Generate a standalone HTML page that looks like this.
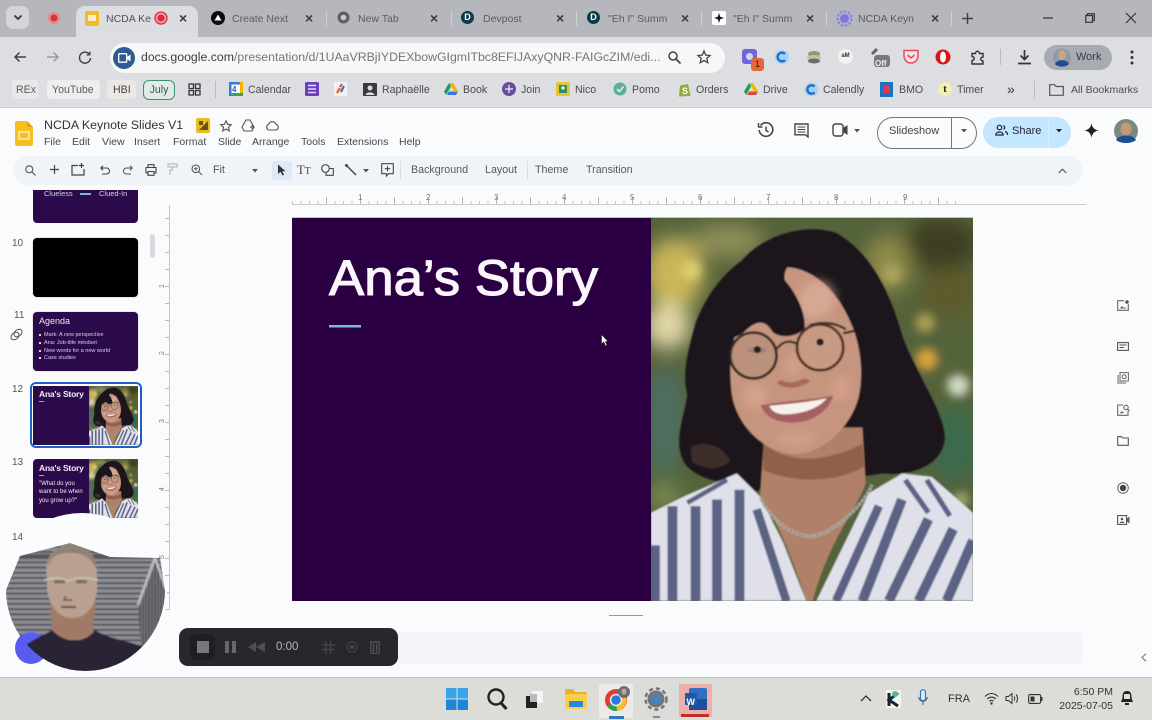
<!DOCTYPE html>
<html><head><meta charset="utf-8"><title>NCDA Keynote Slides V1</title>
<style>
html,body{margin:0;padding:0}
body{width:1152px;height:720px;overflow:hidden;position:relative;background:#f9fbfd;font-family:"Liberation Sans",sans-serif;color:#444}
#w{position:absolute;left:0;top:0;width:1152px;height:720px;overflow:hidden;filter:blur(.35px)}
.a{position:absolute}
.t{position:absolute;white-space:nowrap;line-height:16px;height:16px}
svg.i{position:absolute;overflow:visible}
.tab{font-size:10.5px;color:#5a5c62;top:11px}
.x{font-size:14px;color:#3a3a3e;top:10px;font-weight:bold}
.bm{font-size:10.6px;color:#4a4b50;top:82px}
.me{font-size:10.5px;color:#45474a;top:134px}
.tb{font-size:10.7px;color:#55585c;top:162px}
.r{font-size:8px;color:#777;top:190px}
.rv{font-size:7px;color:#777;left:161px;transform:rotate(-90deg)}
</style></head>
<body>
<svg width="0" height="0" style="position:absolute">
<defs>
<filter id="b30" x="-50%" y="-50%" width="200%" height="200%"><feGaussianBlur stdDeviation="30"/></filter>
<filter id="b14" x="-50%" y="-50%" width="200%" height="200%"><feGaussianBlur stdDeviation="14"/></filter>
<filter id="b2" x="-5%" y="-5%" width="110%" height="110%"><feGaussianBlur stdDeviation="2.500"/></filter>
<clipPath id="sh"><path d="M0,900L100,850L260,780L330,850L400,990L470,1170L500,1170L660,840L760,780L850,790L975,900V1170H0Z"/></clipPath>
<symbol id="ana" viewBox="0 0 975 1170" preserveAspectRatio="none">
<rect width="975" height="1170" fill="#55633b"/>
<g filter="url(#b30)">
<ellipse cx="70" cy="170" rx="90" ry="110" fill="#c9b65a"/>
<ellipse cx="50" cy="330" rx="70" ry="70" fill="#e2d8a8"/>
<ellipse cx="230" cy="70" rx="110" ry="50" fill="#8f8f58"/>
<ellipse cx="720" cy="140" rx="70" ry="90" fill="#8f8a4a"/>
<ellipse cx="880" cy="80" rx="110" ry="80" fill="#3c3d22"/>
<ellipse cx="900" cy="230" rx="80" ry="80" fill="#5f5a2c"/>
<ellipse cx="40" cy="620" rx="60" ry="170" fill="#4d6e60"/>
<ellipse cx="920" cy="690" rx="70" ry="120" fill="#3a6a4c"/>
<ellipse cx="40" cy="850" rx="50" ry="40" fill="#7b8d50"/>
</g>
<g filter="url(#b14)">
<circle cx="830" cy="320" r="30" fill="#a89c52"/>
<circle cx="835" cy="432" r="34" fill="#d9a03c"/>
<circle cx="930" cy="512" r="34" fill="#cfd8c2"/>
<circle cx="940" cy="860" r="22" fill="#a8ae78"/>
<circle cx="730" cy="170" r="30" fill="#a8a45c"/>
<circle cx="120" cy="160" r="30" fill="#dccd70"/>
</g>
<g filter="url(#b2)">
<path fill="#1e191d" d="M275,130C340,50 470,15 560,45C650,95 715,200 755,340C790,460 885,580 890,670C885,750 800,790 700,780L640,790L330,830L300,850C270,800 170,820 110,760C60,700 100,610 110,540C90,470 120,380 135,320C170,230 220,170 275,130Z"/>
<path fill="#5a4038" opacity=".55" d="M120,700C160,680 210,690 240,740C220,770 160,770 125,745Z"/>
<path fill="#b08069" d="M345,640L640,640L650,810C630,880 540,980 490,1170H470C430,1040 370,900 330,850Z"/>
<path fill="#8f604c" d="M340,690C420,750 520,750 640,690L645,760C560,810 430,810 340,770Z"/>
<path fill="#c6957f" d="M405,150C480,150 560,210 605,320C640,400 642,490 628,550C600,650 510,722 435,722C345,716 262,640 245,540C235,450 240,380 268,330C320,280 375,220 405,150Z"/>
<g filter="url(#b14)">
<ellipse cx="500" cy="250" rx="55" ry="60" fill="#dcb09d" opacity=".7" transform="rotate(40 500 250)"/>
<ellipse cx="315" cy="545" rx="35" ry="40" fill="#d9a58f" opacity=".8"/>
<ellipse cx="575" cy="520" rx="30" ry="40" fill="#d6a08b" opacity=".8"/>
<ellipse cx="440" cy="675" rx="60" ry="25" fill="#d2a28e" opacity=".7"/>
<path fill="#d5a590" opacity=".7" d="M415,420H445L455,480H405Z"/>
</g>
<path fill="#1f191c" d="M275,130C320,90 400,60 470,125C425,128 400,150 405,190C440,230 470,290 465,340C440,360 400,370 370,350C350,320 330,300 280,350C262,365 245,362 232,375L200,330C210,250 230,180 275,130Z"/>
<path fill="none" stroke="#3c2c28" stroke-width="7" d="M480,328C520,315 560,320 590,340"/>
<circle cx="310" cy="420" r="70" fill="#a98c7c" fill-opacity=".4" stroke="#33251f" stroke-width="8"/>
<circle cx="512" cy="395" r="70" fill="#c89f8a" fill-opacity=".45" stroke="#4b2f22" stroke-width="8"/>
<path d="M380,400C400,375 420,372 442,385M582,352L615,345" stroke="#33251f" stroke-width="7" fill="none"/>
<path fill="#a5807a" d="M290,405C305,390 335,390 352,405C335,416 305,416 290,405Z"/><circle cx="322" cy="402" r="11" fill="#2a1d18"/>
<path fill="#c0a090" d="M482,385C500,368 530,368 550,382C530,392 500,394 482,385Z"/><circle cx="512" cy="379" r="11" fill="#2a1d18"/>
<path fill="#a86a55" d="M382,505C405,525 455,522 482,498C470,488 460,490 452,495C430,505 410,505 395,495C390,496 385,500 382,505Z"/>
<path fill="#a65f62" d="M332,572C400,560 480,555 552,543C535,600 472,628 420,625C372,622 345,604 332,572Z"/>
<path fill="#f6f2ea" d="M358,574C420,568 480,562 532,551C505,585 450,600 400,600C378,598 366,590 358,574Z"/>
<g clip-path="url(#sh)">
<rect y="770" width="975" height="400" fill="#dfe0ea"/>
<g stroke="#5c6284" fill="none" stroke-width="30">
<path d="M12,1000V1170M65,880V1170M135,880V1170M200,860V1170M268,830V1170"/>
<path d="M320,890L410,1170" stroke-width="26"/>
<path d="M690,880L560,1170" stroke-width="26"/>
<path d="M760,860L640,1170M840,920L720,1170M915,950L810,1170M975,985L895,1170"/>
<path d="M110,870L230,800" stroke-width="14"/>
<path d="M770,800L840,900M835,800L905,910" stroke-width="16"/>
</g>
</g>
<path fill="none" stroke="#c4c4c4" stroke-width="9" stroke-dasharray="12 2" d="M330,855C380,950 450,975 490,972C560,960 640,880 670,815"/>
<path fill="none" stroke="#55503e" stroke-width="2" d="M330,855C380,950 450,975 490,972C560,960 640,880 670,815"/>
</g>
</symbol>
</defs>
</svg>
<div id="w">

<!-- tab strip -->
<div class="a" style="left:0;top:0;width:1152px;height:37px;background:#b6b7bd"></div>
<div class="a" style="left:6px;top:6px;width:23px;height:23px;background:#d4d5d9;border-radius:7px"></div>
<svg class="i" style="left:13px;top:14px" width="10" height="8"><path d="M1.500,1.500L5,5L8.500,1.500" stroke="#333" stroke-width="1.700" fill="none"/></svg>
<svg class="i" style="left:47px;top:11px" width="14" height="14"><circle cx="7" cy="7" r="6" fill="#e58c90"/><circle cx="7" cy="7" r="3.500" fill="#d8323a"/></svg>
<div class="a" style="left:76px;top:6px;width:122px;height:31px;background:#dcdde0;border-radius:9px 9px 0 0"></div>
<div class="a" style="left:85px;top:11px;width:14px;height:15px;background:#eebb2c;border-radius:2px"></div>
<div class="a" style="left:88px;top:15px;width:8px;height:6px;background:#fbeec0"></div>
<div class="t tab" style="left:106px;color:#50525a">NCDA Ke</div>
<svg class="i" style="left:154px;top:11px" width="14" height="14"><circle cx="7" cy="7" r="6" fill="#f0a0a4"/><circle cx="7" cy="7" r="3.500" fill="#dc2c3c"/><circle cx="7" cy="7" r="6" fill="none" stroke="#dc2c3c" stroke-width="1.300"/></svg>
<div class="t x" style="left:179px">×</div>

<svg class="i" style="left:211px;top:11px" width="14" height="14"><circle cx="7" cy="7" r="7" fill="#0b0b10"/><path d="M7,3.500L10.500,9.500H3.500Z" fill="#fff"/></svg>
<div class="t tab" style="left:232px">Create Next</div><div class="t x" style="left:305px">×</div>
<div class="a" style="left:326px;top:11px;width:1px;height:15px;background:#cfd0d4"></div>
<svg class="i" style="left:337px;top:11px" width="13" height="13"><circle cx="6.500" cy="6.500" r="6" fill="#5f6066"/><circle cx="6.500" cy="6.500" r="2.800" fill="#c8c9cd"/></svg>
<div class="t tab" style="left:358px">New Tab</div><div class="t x" style="left:430px">×</div>
<div class="a" style="left:451px;top:11px;width:1px;height:15px;background:#cfd0d4"></div>
<div class="a" style="left:461px;top:11px;width:13px;height:13px;background:#0b3c49;border-radius:50%;color:#fff;font-size:9px;line-height:13px;text-align:center;font-weight:bold">D</div>
<div class="t tab" style="left:483px">Devpost</div><div class="t x" style="left:556px">×</div>
<div class="a" style="left:576px;top:11px;width:1px;height:15px;background:#cfd0d4"></div>
<div class="a" style="left:587px;top:11px;width:13px;height:13px;background:#0b3c49;border-radius:50%;color:#fff;font-size:9px;line-height:13px;text-align:center;font-weight:bold">D</div>
<div class="t tab" style="left:608px">"Eh I" Summ</div><div class="t x" style="left:681px">×</div>
<div class="a" style="left:701px;top:11px;width:1px;height:15px;background:#cfd0d4"></div>
<div class="a" style="left:712px;top:11px;width:14px;height:14px;background:#fff;border-radius:2px"></div>
<svg class="i" style="left:714px;top:13px" width="10" height="10"><path d="M5,0L6.200,3.800L10,5L6.200,6.200L5,10L3.800,6.200L0,5L3.800,3.800Z" fill="#111"/></svg>
<div class="t tab" style="left:733px">"Eh I" Summ</div><div class="t x" style="left:806px">×</div>
<div class="a" style="left:826px;top:11px;width:1px;height:15px;background:#cfd0d4"></div>
<svg class="i" style="left:837px;top:11px" width="15" height="15"><circle cx="7.500" cy="7.500" r="4.500" fill="#7c78e0"/><circle cx="7.500" cy="7.500" r="7" fill="none" stroke="#8a86ea" stroke-width="2.500" stroke-dasharray="2.500 1.500"/></svg>
<div class="t tab" style="left:858px">NCDA Keyn</div><div class="t x" style="left:931px">×</div>
<div class="a" style="left:951px;top:11px;width:1px;height:15px;background:#cfd0d4"></div>
<svg class="i" style="left:962px;top:13px" width="11" height="11"><path d="M5.500,0V11M0,5.500H11" stroke="#444" stroke-width="1.500"/></svg>
<svg class="i" style="left:1043px;top:17px" width="10" height="2"><path d="M0,1H10" stroke="#333" stroke-width="1.200"/></svg>
<svg class="i" style="left:1085px;top:13px" width="10" height="10"><path d="M2.500,2.500V.7H9.300V7.500H7.500M.7,2.500H7.500V9.300H.7Z" stroke="#333" stroke-width="1.200" fill="none"/></svg>
<svg class="i" style="left:1126px;top:13px" width="10" height="10"><path d="M0,0L10,10M10,0L0,10" stroke="#333" stroke-width="1.200"/></svg>

<!-- chrome toolbar -->
<div class="a" style="left:0;top:37px;width:1152px;height:71px;background:#dddee1"></div>
<div class="a" style="left:0;top:107px;width:1152px;height:1px;background:#cfd0d3"></div>
<svg class="i" style="left:13px;top:51px" width="14" height="12"><path d="M13,6H2M6.500,1.500L2,6L6.500,10.500" stroke="#444" stroke-width="1.500" fill="none"/></svg>
<svg class="i" style="left:46px;top:51px" width="14" height="12"><path d="M1,6H12M7.500,1.500L12,6L7.500,10.500" stroke="#9a9b9f" stroke-width="1.500" fill="none"/></svg>
<svg class="i" style="left:78px;top:50px" width="14" height="14"><path d="M11.500,4.500A5.500,5.500 0 1 0 12.500,8" stroke="#444" stroke-width="1.500" fill="none"/><path d="M12.500,1V5.500H8Z" fill="#444"/></svg>
<div class="a" style="left:110px;top:43px;width:615px;height:30px;background:#f6f7f6;border-radius:15px"></div>
<div class="a" style="left:113px;top:47px;width:22px;height:22px;background:#2f5b94;border-radius:50%"></div>
<svg class="i" style="left:118px;top:53px" width="13" height="10"><rect x=".7" y=".7" width="8" height="8.500" rx="1" stroke="#fff" fill="none" stroke-width="1.300"/><path d="M9,4L12.500,1.500V8.500L9,6Z" fill="#fff"/></svg>
<div class="t" style="left:141px;top:49px;font-size:12.3px;color:#3c3d40;width:520px;overflow:hidden">docs.google.com<span style="color:#74767c">/presentation/d/1UAaVRBjIYDEXbowGIgmITbc8EFIJAxyQNR-FAIGcZIM/edi...</span></div>
<svg class="i" style="left:668px;top:51px" width="13" height="13"><circle cx="5" cy="5" r="4" stroke="#444" stroke-width="1.500" fill="none"/><path d="M8,8L12.500,12.500" stroke="#444" stroke-width="1.800"/></svg>
<svg class="i" style="left:697px;top:50px" width="14" height="14"><path d="M7,1L8.800,5.100L13,5.500L9.800,8.400L10.800,12.800L7,10.500L3.200,12.800L4.200,8.400L1,5.500L5.200,5.100Z" stroke="#444" stroke-width="1.300" fill="none"/></svg>

<div class="a" style="left:742px;top:49px;width:15px;height:15px;background:#6e67d8;border-radius:3px"></div>
<svg class="i" style="left:745px;top:52px" width="9" height="9"><circle cx="4.500" cy="4.500" r="3.500" fill="#d8d6f8"/></svg>
<div class="a" style="left:751px;top:58px;width:13px;height:13px;background:#e8663c;border-radius:3px;color:#222;font-size:9px;line-height:13px;text-align:center">1</div>
<svg class="i" style="left:774px;top:49px" width="16" height="16"><circle cx="8" cy="8" r="7" fill="#a8d0f4"/><path d="M11,5A4.300,4.300 0 1 0 11,11" stroke="#1a6fd0" stroke-width="2.400" fill="none"/></svg>
<svg class="i" style="left:806px;top:50px" width="16" height="14"><ellipse cx="8" cy="4" rx="6" ry="3" fill="#8a9a70"/><ellipse cx="8" cy="8" rx="7" ry="3" fill="#c8c0a0"/><ellipse cx="8" cy="11" rx="6" ry="2.500" fill="#6e6e68"/></svg>
<div class="a" style="left:838px;top:49px;width:15px;height:15px;background:#f2f2f2;border-radius:50%;color:#333;font-size:6px;line-height:15px;text-align:center;font-weight:bold">aM</div>
<svg class="i" style="left:871px;top:46px" width="20" height="22"><path d="M1,8L6,3" stroke="#666" stroke-width="3"/><rect x="3" y="9" width="16" height="12" rx="3" fill="#77797d"/></svg>
<div class="t" style="left:875px;top:58px;font-size:8px;color:#eee;font-weight:bold;line-height:12px;height:12px">Off</div>
<svg class="i" style="left:903px;top:49px" width="16" height="15"><path d="M1,1.500H15V7A7,7 0 0 1 1,7Z" fill="#fbe0e4" stroke="#e84a60" stroke-width="1.500"/><path d="M4.500,6L8,9L11.500,6" stroke="#e84a60" stroke-width="1.500" fill="none"/></svg>
<svg class="i" style="left:935px;top:49px" width="16" height="16"><circle cx="8" cy="8" r="7.500" fill="#d81818"/><ellipse cx="8" cy="8" rx="3" ry="5.500" fill="#fff"/></svg>
<svg class="i" style="left:970px;top:50px" width="15" height="15"><path d="M2,3.500H5.500C5.500,.5 9.500,.5 9.500,3.500H13V7C10,7 10,11 13,11V14H2V10.500C5,10.500 5,6.500 2,6.500Z" stroke="#333" stroke-width="1.400" fill="none"/></svg>
<div class="a" style="left:1000px;top:49px;width:1px;height:16px;background:#bbb"></div>
<svg class="i" style="left:1017px;top:50px" width="15" height="15"><path d="M7.500,0V9M3.500,5.500L7.500,9.500L11.500,5.500M1,13.500H14" stroke="#333" stroke-width="1.700" fill="none"/></svg>
<div class="a" style="left:1044px;top:45px;width:68px;height:25px;background:#a9abb2;border-radius:13px"></div>
<svg class="i" style="left:1053px;top:48px" width="18" height="19"><circle cx="9" cy="9.500" r="9" fill="#8d9aa8"/><ellipse cx="9" cy="7" rx="4" ry="5" fill="#caa488"/><path d="M2,16C4,11 14,11 16,16C13,19.500 5,19.500 2,16Z" fill="#1c4f90"/></svg>
<div class="t" style="left:1076px;top:49px;font-size:11px;color:#3a3b40">Work</div>
<svg class="i" style="left:1130px;top:50px" width="4" height="15"><circle cx="2" cy="2" r="1.500" fill="#333"/><circle cx="2" cy="7.500" r="1.500" fill="#333"/><circle cx="2" cy="13" r="1.500" fill="#333"/></svg>

<!-- bookmarks -->
<div class="a" style="left:12px;top:80px;width:26px;height:19px;background:#e8e8ea;border-radius:4px"></div>
<div class="a" style="left:47px;top:80px;width:53px;height:19px;background:#eeeeef;border-radius:4px"></div>
<div class="a" style="left:107px;top:80px;width:29px;height:19px;background:#ebe8e4;border-radius:4px"></div>
<div class="t bm" style="left:16px;color:#5c5d62">REx</div>
<div class="t bm" style="left:52px;color:#5c5d62">YouTube</div>
<div class="t bm" style="left:113px;color:#444">HBI</div>
<div class="a" style="left:143px;top:80px;width:30px;height:18px;border:1px solid #3f8f78;border-radius:6px;background:#e0ebe6;color:#3c5a50;font-size:10.6px;line-height:18px;text-align:center">July</div>
<svg class="i" style="left:188px;top:83px" width="13" height="13"><path d="M1,1H5.500V5.500H1ZM7.500,1H12V5.500H7.500ZM1,7.500H5.500V12H1ZM7.500,7.500H12V12H7.500Z" stroke="#333" stroke-width="1.300" fill="none"/></svg>
<div class="a" style="left:215px;top:81px;width:1px;height:17px;background:#bcbcc0"></div>
<svg class="i" style="left:229px;top:82px" width="14" height="14"><rect width="14" height="14" fill="#fff"/><rect width="14" height="2.500" fill="#3a78e0"/><rect width="2.500" height="14" fill="#3a78e0"/><rect x="11" width="3" height="11" fill="#f4b400"/><rect x="2" y="11" width="12" height="3" fill="#34a853"/></svg>
<div class="t" style="left:232px;top:83px;font-size:8px;color:#2a5db8;line-height:13px;font-weight:bold">4</div>
<div class="t bm" style="left:248px">Calendar</div>
<svg class="i" style="left:305px;top:82px" width="14" height="14"><rect width="14" height="14" rx="1.500" fill="#6a3fc0"/><path d="M3,3.500H11M3,7H11M3,10.500H11" stroke="#e4dcf8" stroke-width="1.500"/></svg>
<svg class="i" style="left:334px;top:82px" width="13" height="14"><rect width="13" height="14" fill="#f2f2f2"/><path d="M3,11L6,6" stroke="#f06a2a" stroke-width="2.500"/><path d="M7,10L10,4" stroke="#2a6ad8" stroke-width="2"/><path d="M6,5L8,2" stroke="#e03a50" stroke-width="2"/></svg>
<svg class="i" style="left:363px;top:83px" width="14" height="13"><rect width="14" height="13" rx="1" fill="#3a3a3e"/><circle cx="7" cy="5" r="2.500" fill="#ddd"/><path d="M2.500,12C3.500,8.500 10.500,8.500 11.500,12Z" fill="#ddd"/></svg>
<div class="t bm" style="left:382px">Raphaëlle</div>
<svg class="i" style="left:444px;top:83px" width="14" height="12"><path d="M5,0H9L14,8H10Z" fill="#f4b400"/><path d="M5,0L0,8.500L2,12L7,3.500Z" fill="#1a9e5c"/><path d="M3,12H12L14,8.500H4.800Z" fill="#3a78e0"/></svg>
<div class="t bm" style="left:463px">Book</div>
<svg class="i" style="left:502px;top:82px" width="14" height="14"><circle cx="7" cy="7" r="7" fill="#6a4ca0"/><path d="M7,3V11M3,7H11" stroke="#ddd" stroke-width="1.500"/></svg>
<div class="t bm" style="left:521px">Join</div>
<svg class="i" style="left:556px;top:82px" width="14" height="14"><rect width="14" height="14" rx="2" fill="#e6c432"/><rect x="3" y="3" width="8" height="8" fill="#2f8f5a"/><circle cx="7" cy="6" r="1.700" fill="#eee"/></svg>
<div class="t bm" style="left:575px">Nico</div>
<svg class="i" style="left:613px;top:82px" width="14" height="14"><circle cx="7" cy="7" r="6.500" fill="#5aae9e"/><path d="M4,7L6.300,9.500L10.500,4.500" stroke="#eee" stroke-width="1.500" fill="none"/></svg>
<div class="t bm" style="left:632px">Pomo</div>
<svg class="i" style="left:678px;top:82px" width="13" height="15"><path d="M2,3.500L10,2L12.500,14L1,14.500Z" fill="#8fae3c"/><text x="4" y="12" font-size="9" fill="#fff" font-family="Liberation Sans" font-weight="bold">S</text></svg>
<div class="t bm" style="left:696px">Orders</div>
<svg class="i" style="left:744px;top:83px" width="14" height="12"><path d="M5,0H9L14,8H10Z" fill="#f4b400"/><path d="M5,0L0,8.500L2,12L7,3.500Z" fill="#1a9e5c"/><path d="M3,12H12L14,8.500H4.800Z" fill="#d84a3a"/></svg>
<div class="t bm" style="left:763px">Drive</div>
<svg class="i" style="left:804px;top:82px" width="15" height="15"><circle cx="7.500" cy="7.500" r="7" fill="#a8d0f4"/><path d="M10.500,4.500A4.200,4.200 0 1 0 10.500,10.500" stroke="#1a6fd0" stroke-width="2.400" fill="none"/></svg>
<div class="t bm" style="left:823px">Calendly</div>
<svg class="i" style="left:880px;top:82px" width="13" height="15"><rect width="13" height="15" fill="#1a72c0"/><rect x="3" y="4" width="7" height="7" rx="1" fill="#e03a50"/></svg>
<div class="t bm" style="left:899px">BMO</div>
<div class="a" style="left:938px;top:82px;width:14px;height:14px;background:#f4eeb0;border-radius:50%;color:#222;font:bold 11px/14px 'Liberation Serif',serif;text-align:center">t</div>
<div class="t bm" style="left:957px">Timer</div>
<div class="t" style="left:1007px;top:81px;font-size:14px;color:#333">»</div>
<div class="a" style="left:1034px;top:81px;width:1px;height:17px;background:#bcbcc0"></div>
<svg class="i" style="left:1049px;top:84px" width="15" height="12"><path d="M.7,.7H5.500L7,2.500H14.300V11.300H.7Z" stroke="#555" stroke-width="1.200" fill="none"/></svg>
<div class="t bm" style="left:1071px;font-size:10.500px">All Bookmarks</div>

<!-- Slides header -->
<div class="a" style="left:0;top:108px;width:1152px;height:569px;background:#f9fbfd"></div>
<svg class="i" style="left:15px;top:121px" width="18" height="25"><path d="M2,0H12L18,6V23A2,2 0 0 1 16,25H2A2,2 0 0 1 0,23V2A2,2 0 0 1 2,0Z" fill="#f7bf1e"/><path d="M12,0L18,6H12Z" fill="#e3a50f"/><rect x="4" y="11" width="10" height="7" fill="none" stroke="#fdeeb6" stroke-width="1.500"/></svg>
<div class="t" style="left:44px;top:117px;font-size:12.400px;color:#333">NCDA Keynote Slides V1</div>
<div class="a" style="left:196px;top:118px;width:14px;height:15px;background:#e9bd1e;border-radius:2px"></div>
<svg class="i" style="left:199px;top:121px" width="9" height="9"><path d="M0,9L9,0V9Z" fill="#6a5210"/><path d="M0,0H4V4H0Z" fill="#6a5210"/></svg>
<svg class="i" style="left:220px;top:120px" width="12" height="12"><path d="M6,.8L7.600,4.300L11.300,4.700L8.500,7.200L9.300,11L6,9L2.700,11L3.500,7.200L.7,4.700L4.400,4.300Z" stroke="#555" stroke-width="1.100" fill="none"/></svg>
<svg class="i" style="left:241px;top:119px" width="14" height="13"><path d="M5,1H9L13,8L11,12H3L1,8Z" stroke="#555" stroke-width="1.100" fill="none"/><path d="M9,8H13M11,6V10" stroke="#555"/></svg>
<svg class="i" style="left:265px;top:120px" width="14" height="11"><path d="M3.500,10A3,3 0 0 1 3.500,4.500A4,4 0 0 1 11,4.200A3,3 0 0 1 11,10Z" stroke="#555" stroke-width="1.100" fill="none"/></svg>
<div class="t me" style="left:44px">File</div><div class="t me" style="left:72px">Edit</div><div class="t me" style="left:102px">View</div><div class="t me" style="left:134px">Insert</div><div class="t me" style="left:173px">Format</div><div class="t me" style="left:218px">Slide</div><div class="t me" style="left:252px">Arrange</div><div class="t me" style="left:301px">Tools</div><div class="t me" style="left:337px">Extensions</div><div class="t me" style="left:399px">Help</div>

<svg class="i" style="left:758px;top:122px" width="16" height="16"><path d="M2.500,3.500A6.800,6.800 0 1 1 1.200,8" stroke="#444" stroke-width="1.600" fill="none"/><path d="M.5,1V5H4.500" stroke="#444" stroke-width="1.400" fill="none"/><path d="M8,4.500V8.500L10.500,10" stroke="#444" stroke-width="1.500" fill="none"/></svg>
<svg class="i" style="left:794px;top:123px" width="15" height="15"><path d="M1,1H14V14L11.500,11.800H1Z" stroke="#444" stroke-width="1.400" fill="none"/><path d="M3.500,4H11.500M3.500,6.500H11.500M3.500,9H11.500" stroke="#444" stroke-width="1.100"/></svg>
<svg class="i" style="left:832px;top:123px" width="16" height="14"><rect x="1" y="1" width="10" height="12" rx="2.500" stroke="#444" stroke-width="1.400" fill="none"/><path d="M11,5L15.500,2V12L11,9Z" fill="#444"/></svg>
<svg class="i" style="left:854px;top:129px" width="6" height="4"><path d="M0,0H6L3,3.500Z" fill="#555"/></svg>
<div class="a" style="left:877px;top:117px;width:98px;height:30px;border:1px solid #747775;border-radius:16px"></div>
<div class="a" style="left:951px;top:118px;width:1px;height:30px;background:#747775"></div>
<div class="t" style="left:889px;top:123px;font-size:11px;color:#444">Slideshow</div>
<svg class="i" style="left:961px;top:129px" width="6" height="4"><path d="M0,0H6L3,3.500Z" fill="#555"/></svg>
<div class="a" style="left:983px;top:117px;width:88px;height:31px;background:#c2e7ff;border-radius:16px"></div>
<div class="a" style="left:1048px;top:117px;width:1px;height:31px;background:#d6efff"></div>
<svg class="i" style="left:995px;top:124px" width="13" height="12"><circle cx="4.500" cy="3.500" r="2.300" stroke="#223" stroke-width="1.200" fill="none"/><path d="M.8,11C.8,7 8.200,7 8.200,11Z" stroke="#223" stroke-width="1.200" fill="none"/><path d="M8.500,1.500A2.300,2.300 0 0 1 8.500,5.500M10,7.500C12,8 12.500,9.500 12.500,11" stroke="#223" stroke-width="1.200" fill="none"/></svg>
<div class="t" style="left:1012px;top:123px;font-size:11px;color:#223">Share</div>
<svg class="i" style="left:1056px;top:129px" width="6" height="4"><path d="M0,0H6L3,3.500Z" fill="#223"/></svg>
<svg class="i" style="left:1084px;top:123px" width="15" height="15"><path d="M7.500,0C8,4.500 10.500,7 15,7.500C10.500,8 8,10.500 7.500,15C7,10.500 4.500,8 0,7.500C4.500,7 7,4.500 7.500,0Z" fill="#222"/></svg>
<svg class="i" style="left:1114px;top:119px" width="24" height="24"><circle cx="12" cy="12" r="12" fill="#7b8a80"/><ellipse cx="12" cy="10" rx="5.500" ry="6.500" fill="#c49878"/><path d="M2,21C5,15 19,15 22,21C17,25 7,25 2,21Z" fill="#1b4f94"/></svg>

<!-- toolbar pill -->
<div class="a" style="left:14px;top:156px;width:1068px;height:29px;background:#f0f4f8;border-radius:14px"></div>
<svg class="i" style="left:25px;top:165px" width="11" height="11"><circle cx="4.300" cy="4.300" r="3.500" stroke="#555" stroke-width="1.100" fill="none"/><path d="M7,7L10.500,10.500" stroke="#555" stroke-width="1.200"/></svg>
<svg class="i" style="left:50px;top:165px" width="9" height="9"><path d="M4.500,0V9M0,4.500H9" stroke="#444" stroke-width="1.200"/></svg>
<svg class="i" style="left:71px;top:163px" width="14" height="13"><path d="M7,2.500H1V12H13V6" stroke="#444" stroke-width="1.200" fill="none"/><path d="M10.500,0V5M8,2.500H13" stroke="#444" stroke-width="1.200"/></svg>
<svg class="i" style="left:100px;top:165px" width="10" height="10"><path d="M1,3H6.500A2.800,2.800 0 0 1 6.500,9H2" stroke="#444" stroke-width="1.100" fill="none"/><path d="M3,.8L.8,3L3,5.200" stroke="#444" stroke-width="1.100" fill="none"/></svg>
<svg class="i" style="left:123px;top:165px" width="10" height="10"><path d="M9,3H3.500A2.800,2.800 0 0 0 3.500,9H8" stroke="#555" stroke-width="1.100" fill="none"/><path d="M7,.8L9.200,3L7,5.200" stroke="#555" stroke-width="1.100" fill="none"/></svg>
<svg class="i" style="left:145px;top:164px" width="12" height="12"><path d="M3,3.500V.7H9V3.500M3,9H1V3.500H11V9H9M3,7.500H9V11.300H3Z" stroke="#444" stroke-width="1.100" fill="none"/></svg>
<svg class="i" style="left:167px;top:163px" width="12" height="13"><path d="M1,1H10V4H1ZM5.500,4V7H3V12" stroke="#bbb" stroke-width="1.200" fill="none"/></svg>
<svg class="i" style="left:191px;top:164px" width="12" height="12"><circle cx="4.800" cy="4.800" r="3.800" stroke="#555" stroke-width="1.100" fill="none"/><path d="M7.500,7.500L11,11M3,4.800H6.600M4.800,3V6.600" stroke="#555" stroke-width="1"/></svg>
<div class="t tb" style="left:213px;color:#555">Fit</div>
<svg class="i" style="left:252px;top:169px" width="6" height="4"><path d="M0,0H6L3,3.500Z" fill="#555"/></svg>
<div class="a" style="left:272px;top:161px;width:20px;height:19px;background:#dfe8f6;border-radius:3px"></div>
<svg class="i" style="left:277px;top:164px" width="9" height="12"><path d="M1,.5V10L3.500,7.800L5.500,11.500L7,10.700L5.200,7.200H8.500Z" fill="#333"/></svg>
<div class="t" style="left:297px;top:162px;font-size:12.500px;color:#444;font-family:'Liberation Serif',serif">T<span style="font-size:10px">T</span></div>
<svg class="i" style="left:321px;top:164px" width="13" height="12"><circle cx="4.500" cy="4.500" r="3.800" stroke="#444" stroke-width="1.100" fill="none"/><path d="M8.500,4.500H12.300V11.300H5V8.800" stroke="#444" stroke-width="1.100" fill="none"/></svg>
<svg class="i" style="left:345px;top:164px" width="12" height="12"><path d="M1,1L11,11" stroke="#444" stroke-width="1.500"/><circle cx="1.500" cy="1.500" r="1.500" fill="#444"/></svg>
<svg class="i" style="left:363px;top:169px" width="6" height="4"><path d="M0,0H6L3,3.500Z" fill="#555"/></svg>
<svg class="i" style="left:381px;top:163px" width="13" height="14"><path d="M.7,.7H12.300V10.700H7.500L5.500,13V10.700H.7Z" stroke="#444" stroke-width="1.100" fill="none"/><path d="M6.500,3V8.300M3.800,5.700H9.200" stroke="#444" stroke-width="1.100"/></svg>
<div class="a" style="left:400px;top:161px;width:1px;height:19px;background:#d8dbe0"></div>
<div class="t tb" style="left:411px">Background</div>
<div class="t tb" style="left:485px">Layout</div>
<div class="a" style="left:527px;top:161px;width:1px;height:19px;background:#d8dbe0"></div>
<div class="t tb" style="left:535px">Theme</div>
<div class="t tb" style="left:586px">Transition</div>
<svg class="i" style="left:1058px;top:168px" width="9" height="6"><path d="M.7,5L4.500,1.200L8.300,5" stroke="#555" stroke-width="1.100" fill="none"/></svg>

<!-- horizontal ruler -->
<div class="a" style="left:292px;top:204px;width:794px;height:1px;background:#c9cbcf"></div>
<div class="a" style="left:292px;top:201px;width:668px;height:3px;background:repeating-linear-gradient(90deg,#c4c4c4 0 1px,transparent 1px 8.500px)"></div>
<div class="a" style="left:326px;top:197px;width:634px;height:7px;background:repeating-linear-gradient(90deg,#b4b4b4 0 1px,transparent 1px 34px)"></div>
<div class="t r" style="left:358px">1</div><div class="t r" style="left:426px">2</div><div class="t r" style="left:494px">3</div><div class="t r" style="left:562px">4</div><div class="t r" style="left:630px">5</div><div class="t r" style="left:698px">6</div><div class="t r" style="left:766px">7</div><div class="t r" style="left:834px">8</div><div class="t r" style="left:903px">9</div>
<!-- vertical ruler -->
<div class="a" style="left:169px;top:205px;width:1px;height:405px;background:#c4c6ca"></div>
<div class="a" style="left:165px;top:218px;width:4px;height:392px;background:repeating-linear-gradient(180deg,#bbb 0 1px,transparent 1px 17px)"></div>
<div class="t rv" style="top:278px">1</div><div class="t rv" style="top:345px">2</div><div class="t rv" style="top:413px">3</div><div class="t rv" style="top:481px">4</div><div class="t rv" style="top:549px">5</div>

<!-- filmstrip -->
<div class="a" style="left:33px;top:190px;width:105px;height:33px;background:#2a0a4a;border-radius:0 0 4px 4px"></div>
<div class="t" style="left:44px;top:188px;font-size:7.500px;color:#d8cfe4;line-height:12px;height:12px">Clueless</div>
<div class="a" style="left:80px;top:193px;width:11px;height:2px;background:#7ab8d8"></div>
<div class="t" style="left:99px;top:188px;font-size:7.500px;color:#d8cfe4;line-height:12px;height:12px">Clued-In</div>
<div class="t" style="left:12px;top:236px;font-size:10px;color:#555">10</div>
<div class="a" style="left:33px;top:238px;width:105px;height:59px;background:#000;border-radius:4px;box-shadow:0 0 0 1px #e8e8ec"></div>
<div class="a" style="left:150px;top:234px;width:5px;height:24px;background:#d8dade;border-radius:3px"></div>
<div class="t" style="left:14px;top:308px;font-size:10px;color:#555">11</div>
<svg class="i" style="left:10px;top:328px" width="13" height="13"><ellipse cx="5" cy="8" rx="4.500" ry="3.200" transform="rotate(-40 5 8)" stroke="#555" fill="none"/><ellipse cx="8" cy="5" rx="4.500" ry="3.200" transform="rotate(-40 8 5)" stroke="#555" fill="none"/></svg>
<div class="a" style="left:33px;top:312px;width:105px;height:59px;background:#2a0a4a;border-radius:4px;box-shadow:0 0 0 1px #e8e8ec"></div>
<div class="t" style="left:39px;top:313px;font-size:9px;color:#f0eaf4">Agenda</div>
<div class="t" style="left:44px;top:331px;font-size:5.500px;color:#d8cfe4;height:8px;line-height:8px">Mark: A new perspective</div>
<div class="t" style="left:44px;top:339px;font-size:5.500px;color:#d8cfe4;height:8px;line-height:8px">Ana: Job-title mindset</div>
<div class="t" style="left:44px;top:347px;font-size:5.500px;color:#d8cfe4;height:8px;line-height:8px">New words for a new world</div>
<div class="t" style="left:44px;top:354px;font-size:5.500px;color:#d8cfe4;height:8px;line-height:8px">Case studies</div>
<div class="a" style="left:39px;top:334px;width:2px;height:2px;background:#ddd"></div><div class="a" style="left:39px;top:342px;width:2px;height:2px;background:#ddd"></div><div class="a" style="left:39px;top:350px;width:2px;height:2px;background:#ddd"></div><div class="a" style="left:39px;top:357px;width:2px;height:2px;background:#ddd"></div>

<div class="t" style="left:12px;top:382px;font-size:10px;color:#555">12</div>
<div class="a" style="left:30px;top:382px;width:108px;height:62px;border:2px solid #1f5fc8;border-radius:6px;background:#fff"></div>
<div class="a" style="left:33px;top:386px;width:56px;height:59px;background:#2a0a4a"></div>
<svg class="a" style="left:89px;top:386px" width="49" height="59"><use href="#ana" width="49" height="59"/></svg>
<div class="t" style="left:39px;top:386px;font-size:8.500px;letter-spacing:-.2px;color:#f4eef6;font-weight:bold">Ana's Story</div>
<div class="a" style="left:39px;top:401px;width:5px;height:1px;background:#7ab8d8"></div>

<div class="t" style="left:12px;top:455px;font-size:10px;color:#555">13</div>
<div class="a" style="left:33px;top:459px;width:56px;height:59px;background:#2a0a4a;border-radius:4px 0 0 4px"></div>
<svg class="a" style="left:89px;top:459px" width="49" height="59"><use href="#ana" width="49" height="59"/></svg>
<div class="t" style="left:39px;top:460px;font-size:8.500px;letter-spacing:-.2px;color:#f4eef6;font-weight:bold">Ana's Story</div>
<div class="a" style="left:39px;top:475px;width:5px;height:1px;background:#7ab8d8"></div>
<div class="t" style="left:39px;top:480px;font-size:6px;color:#eee;line-height:8.300px;height:26px">"What do you<br>want to be when<br>you grow up?"</div>

<!-- white haze behind webcam -->
<div class="a" style="left:-3px;top:513px;width:170px;height:164px;background:#fbfcfd;border-radius:50%"></div>
<div class="t" style="left:12px;top:530px;font-size:10px;color:#555">14</div>

<!-- slide -->
<div class="a" style="left:292px;top:217px;width:681px;height:1px;background:#c8bcd0"></div>
<div class="a" style="left:292px;top:218px;width:360px;height:383px;background:#2a0042"></div>
<svg class="a" style="left:651px;top:218px" width="322" height="383"><use href="#ana" width="322" height="383"/></svg>
<svg class="a" style="left:292px;top:218px" width="360" height="120">
<text x="37" y="77" font-family="Liberation Sans,sans-serif" font-size="50" fill="#fbf6fb" textLength="269" lengthAdjust="spacingAndGlyphs" stroke="#fbf6fb" stroke-width="1.100">Ana’s Story</text>
<rect x="37" y="107" width="32" height="2.500" fill="#7dbcd8"/>
</svg>
<svg class="i" style="left:601px;top:334px" width="8" height="13"><path d="M.5,.5V10L2.800,8L4.500,12L6,11.300L4.400,7.500H7.200Z" fill="#fff" stroke="#222" stroke-width=".6"/></svg>
<div class="a" style="left:609px;top:615px;width:34px;height:1px;background:#999"></div>

<!-- side panel icons -->
<svg class="i" style="left:1117px;top:300px" width="12" height="11"><path d="M7,.7H.7V10.300H11.300V4" stroke="#666" stroke-width="1.100" fill="none"/><circle cx="10" cy="2" r="1.800" fill="#555"/><path d="M2.500,8.500L5,6L7,8L8,7L9.500,8.500Z" fill="#666"/></svg>
<svg class="i" style="left:1117px;top:342px" width="12" height="9"><rect x=".6" y=".6" width="10.800" height="7.800" stroke="#555" stroke-width="1.100" fill="none"/><path d="M2.500,3H9.500M2.500,5.500H7" stroke="#555"/></svg>
<svg class="i" style="left:1117px;top:372px" width="12" height="12"><rect x="3" y=".6" width="8.400" height="8.400" stroke="#666" fill="none"/><circle cx="7.200" cy="4.800" r="2" stroke="#666" fill="none"/><path d="M1,3V11H9" stroke="#666" fill="none"/></svg>
<svg class="i" style="left:1117px;top:404px" width="13" height="13"><path d="M6,1H.7V11.300H11V7" stroke="#666" stroke-width="1.100" fill="none"/><circle cx="9" cy="3.500" r="2.200" stroke="#555" fill="none"/><path d="M10.500,5L12.500,7" stroke="#555"/><path d="M2.500,9.500L5,7L7,9Z" fill="#666"/></svg>
<svg class="i" style="left:1117px;top:436px" width="12" height="10"><path d="M.7,.7H4.500L5.800,2H11.300V9.300H.7Z" stroke="#555" stroke-width="1.100" fill="none"/></svg>
<svg class="i" style="left:1117px;top:482px" width="12" height="12"><circle cx="6" cy="6" r="5.300" stroke="#666" fill="none"/><circle cx="6" cy="6" r="3.200" fill="#444"/></svg>
<svg class="i" style="left:1117px;top:515px" width="13" height="10"><rect x=".6" y=".6" width="9" height="8.800" stroke="#555" stroke-width="1.100" fill="none"/><path d="M10,3.500L12.500,1.500V8.500L10,6.500Z" fill="#555"/><circle cx="5" cy="4" r="1.300" fill="#555"/><path d="M2.500,8C3,6 7,6 7.500,8Z" fill="#555"/></svg>

<!-- notes -->
<div class="a" style="left:398px;top:632px;width:684px;height:32px;background:#f2f4f7;border-radius:4px"></div>
<svg class="i" style="left:1141px;top:653px" width="6" height="9"><path d="M5,.7L1,4.500L5,8.300" stroke="#777" stroke-width="1.100" fill="none"/></svg>

<!-- webcam -->
<svg class="a" style="left:0;top:530px" width="172" height="147" viewBox="0 530 172 147">
<defs><clipPath id="cam"><path d="M6,590A79.500,81 0 0 0 165,590L160,558L110,557L70,543L20,556Z"/></clipPath>
<pattern id="blinds" width="6" height="5.200" patternUnits="userSpaceOnUse"><rect width="6" height="5.200" fill="#8e8f94"/><rect width="6" height="1.500" fill="#404146"/></pattern>
<pattern id="blinds2" width="3" height="3" patternUnits="userSpaceOnUse"><rect width="3" height="3" fill="#4e4e54"/><rect width="1" height="3" fill="#86868c"/></pattern>
<filter id="cb" x="-5%" y="-5%" width="110%" height="110%"><feGaussianBlur stdDeviation=".8"/></filter></defs>
<circle cx="31" cy="648" r="16" fill="#5a5cf0"/>
<g clip-path="url(#cam)"><g filter="url(#cb)">
<rect x="0" y="540" width="172" height="140" fill="url(#blinds)"/>
<rect x="0" y="554" width="172" height="5" fill="#55565c"/>
<path d="M138,605L155,558L166,590V635L142,660Z" fill="url(#blinds2)"/>
<path d="M138,605L155,558" stroke="#b8b8bc" stroke-width="3"/>
<path d="M155,558L166,590" stroke="#c8c8cc" stroke-width="2"/>
<circle cx="31" cy="648" r="16" fill="#5a5cf0"/>
<path d="M50,600C52,625 52,632 50,640H92C92,630 94,620 96,600Z" fill="#a07a66"/>
<path d="M47,578C43,555 58,544 72,544C88,544 98,556 97,580L97,592C94,610 84,618 72,618C60,618 50,608 47,590Z" fill="#b9a091"/>
<path d="M48,568C48,552 60,544 72,544C86,544 96,554 96,568C90,556 80,552 68,553C56,553 50,558 48,568Z" fill="#8e8276"/>
<path d="M44,580C56,577 62,578 68,581C76,577 88,577 98,580" stroke="#cfc9bc" stroke-width="1.300" fill="none"/>
<rect x="54" y="580" width="11" height="3.500" rx="1.500" fill="#7f7068"/><rect x="76" y="580" width="11" height="3.500" rx="1.500" fill="#7f7068"/>
<path d="M66,596L64,600H72" stroke="#7a5c50" stroke-width="1.800" fill="none"/>
<path d="M61,607H76" stroke="#6a4c42" stroke-width="2"/>
<path d="M20,650C30,640 45,635 52,630C65,644 85,644 95,630C110,640 130,640 150,650V680H20Z" fill="#2a2235"/>
</g></g>
</svg>

<!-- recording bar -->
<div class="a" style="left:179px;top:628px;width:219px;height:38px;background:#26282c;border-radius:9px"></div>
<div class="a" style="left:190px;top:634px;width:25px;height:26px;background:#1e1f23;border-radius:6px"></div>
<div class="a" style="left:197px;top:641px;width:12px;height:12px;background:#77787c"></div>
<div class="a" style="left:225px;top:641px;width:4px;height:12px;background:#66676b"></div><div class="a" style="left:232px;top:641px;width:4px;height:12px;background:#66676b"></div>
<svg class="i" style="left:248px;top:642px" width="17" height="10"><path d="M0,5L8,0V10ZM8,5L17,0V10Z" fill="#4e4f53"/></svg>
<div class="t" style="left:276px;top:639px;font-size:11.500px;color:#b4b5b8">0:00</div>
<svg class="i" style="left:322px;top:641px" width="13" height="13"><path d="M4,0V13M8.500,0V13M0,4H13M0,8.500H13" stroke="#47484c" stroke-width="1.300"/></svg>
<svg class="i" style="left:346px;top:641px" width="12" height="12"><circle cx="6" cy="6" r="5" stroke="#3e3f43" stroke-width="1.300" fill="none"/><circle cx="6" cy="6" r="2" fill="#47484c"/></svg>
<svg class="i" style="left:369px;top:640px" width="12" height="14"><path d="M1,2H11M2,2V13.300H10V2M4.500,4V12M7.500,4V12" stroke="#54555a" stroke-width="1.200" fill="none"/></svg>

<!-- taskbar -->
<div class="a" style="left:0;top:677px;width:1152px;height:43px;background:#dcdcd8;border-top:1px solid #bfc0bd;box-sizing:border-box"></div>
<div class="a" style="left:599px;top:684px;width:34px;height:34px;background:#eceae6"></div>
<div class="a" style="left:679px;top:684px;width:33px;height:33px;background:#ecb0a8"></div>
<div class="a" style="left:681px;top:714px;width:28px;height:3px;background:#c0302a"></div>
<div class="a" style="left:609px;top:716px;width:15px;height:3px;background:#2a78c8"></div>
<svg class="i" style="left:446px;top:688px" width="22" height="22"><rect width="10.500" height="10.500" fill="#39a4e8"/><rect x="11.500" width="10.500" height="10.500" fill="#39a4e8"/><rect y="11.500" width="10.500" height="10.500" fill="#1f86d6"/><rect x="11.500" y="11.500" width="10.500" height="10.500" fill="#1f86d6"/></svg>
<svg class="i" style="left:487px;top:688px" width="21" height="22"><circle cx="9" cy="9" r="7.500" stroke="#222" stroke-width="2.400" fill="none"/><path d="M14,15L19.500,21" stroke="#222" stroke-width="3"/></svg>
<svg class="i" style="left:526px;top:691px" width="17" height="17"><rect x="6" width="11" height="12" fill="#f5f5f5"/><rect y="5" width="11" height="12" fill="#222"/><rect x="4" y="3" width="7" height="8" fill="#bbb"/></svg>
<svg class="i" style="left:565px;top:689px" width="22" height="20"><path d="M0,2A2,2 0 0 1 2,0H8L10,3H20A2,2 0 0 1 22,5V7H0Z" fill="#e9b22a"/><rect y="5" width="22" height="15" rx="2" fill="#f9cf4a"/><rect x="4" y="12" width="14" height="6" fill="#2a8adf"/></svg>
<svg class="i" style="left:604px;top:686px" width="26" height="26"><circle cx="12" cy="14" r="11" fill="#e33b2e"/><path d="M12,14L3,20A11,11 0 0 0 13,25Z" fill="#2aa24a"/><path d="M12,14L22,11A11,11 0 0 1 13,25Z" fill="#f6c026"/><circle cx="12" cy="14" r="5.500" fill="#2a78e0" stroke="#eee" stroke-width="1.500"/><circle cx="20" cy="6" r="6" fill="#6a7078"/><ellipse cx="20" cy="5.500" rx="2.500" ry="3" fill="#caa488"/></svg>
<svg class="i" style="left:645px;top:688px" width="22" height="22"><circle cx="11" cy="11" r="8.500" fill="#72767c"/><circle cx="11" cy="11" r="10.500" fill="none" stroke="#72767c" stroke-width="2.500" stroke-dasharray="4 3"/><circle cx="11" cy="11" r="4.500" fill="#3f86c8"/></svg>
<div class="a" style="left:653px;top:716px;width:7px;height:2px;background:#888"></div>
<svg class="i" style="left:685px;top:688px" width="22" height="22"><rect x="4" y="0" width="18" height="22" rx="2" fill="#2f6fc4"/><rect x="4" y="11" width="18" height="11" fill="#1a4f9c"/><rect x="0" y="5" width="12" height="12" rx="1" fill="#1c5aa8"/></svg>
<div class="t" style="left:686.500px;top:703px;font-size:9px;font-weight:bold;color:#fff;margin-top:-9px">W</div>
<svg class="i" style="left:860px;top:695px" width="12" height="7"><path d="M1,6L6,1L11,6" stroke="#333" stroke-width="1.300" fill="none"/></svg>
<svg class="i" style="left:886px;top:690px" width="15" height="18"><rect width="15" height="18" fill="#f4f4f2"/><path d="M3,3V16M12,3L3,10L12,16" stroke="#123" stroke-width="3" fill="none"/><circle cx="9" cy="4" r="3" fill="#4dbf8a"/></svg>
<svg class="i" style="left:918px;top:689px" width="10" height="20"><rect x="2.500" y=".7" width="5" height="11" rx="2.500" stroke="#2a78d0" stroke-width="1.200" fill="#dfeaf6"/><path d="M.7,8A4.300,4.300 0 0 0 9.300,8M5,12.500V16" stroke="#555" fill="none"/></svg>
<div class="t" style="left:948px;top:691px;font-size:11px;color:#333">FRA</div>
<svg class="i" style="left:984px;top:692px" width="15" height="13"><path d="M1,4.500C5,.5 10,.5 14,4.500M3.200,7C6,4.500 9,4.500 11.800,7M5.500,9.300C6.800,8 8.200,8 9.500,9.300" stroke="#333" stroke-width="1.100" fill="none"/><circle cx="7.500" cy="11.500" r="1.200" fill="#333"/></svg>
<svg class="i" style="left:1005px;top:692px" width="13" height="13"><path d="M1,4.500H3.500L7,1.500V11.500L3.500,8.500H1Z" stroke="#333" fill="none"/><path d="M9,4.500C10,5.500 10,7.500 9,8.500M11,2.500C13,4.500 13,8.500 11,10.500" stroke="#333" fill="none"/></svg>
<svg class="i" style="left:1028px;top:694px" width="15" height="10"><rect x=".6" y=".6" width="12" height="8.800" rx="1.500" stroke="#333" stroke-width="1.100" fill="none"/><rect x="2.500" y="2.500" width="4" height="5" fill="#333"/><rect x="13" y="3" width="1.500" height="4" fill="#333"/></svg>
<div class="t" style="right:39px;top:684px;font-size:10.500px;color:#333">6:50 PM</div>
<div class="t" style="right:39px;top:698px;font-size:10.500px;color:#333">2025-07-05</div>
<svg class="i" style="left:1120px;top:690px" width="14" height="17"><path d="M7,1C3,1 2.500,4 2.500,8L1,12H13L11.500,8C11.500,4 11,1 7,1Z" fill="#222"/><rect x="5" y="13" width="4" height="2" fill="#222"/><rect x="4" y="4" width="6" height="5" fill="#ddd"/></svg>
</div>
</body></html>
